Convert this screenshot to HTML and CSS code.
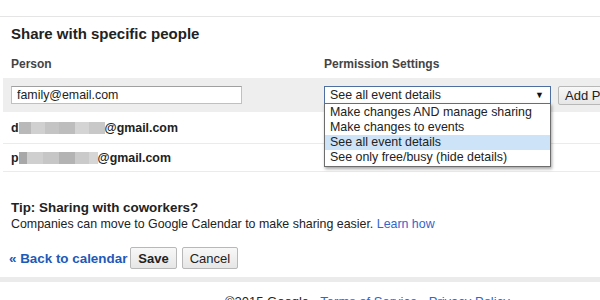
FILE: index.html
```html
<!DOCTYPE html>
<html lang="en">
<head>
    <meta charset="UTF-8">
    <meta name="viewport" content="width=device-width, initial-scale=1.0">
    <title>Calendar sharing</title>
    <link rel="stylesheet" href="styles.css">
</head>
<body>
    <div class="topbar"></div>
    <div class="page">
        <h2 class="share_head">Share with specific people</h2>

        <div class="share_table">
            <div class="share_row share_labels">
                <div class="cell_person">Person</div>
                <div class="cell_perm">Permission Settings</div>
            </div>

            <div class="share_row share_add">
                <div class="cell_person"><input class="person_input" type="text" value="family@email.com"></div>
                <div class="cell_perm">
                    <div class="select_wrap">
                        <div class="select_box"><span>See all event details</span><span class="select_arrow">&#9660;</span></div>
                        <ul class="select_list">
                            <li>Make changes AND manage sharing</li>
                            <li>Make changes to events</li>
                            <li class="selected">See all event details</li>
                            <li>See only free/busy (hide details)</li>
                        </ul>
                    </div>
                    <button class="btn add_btn">Add Person</button>
                </div>
            </div>

            <div class="share_row share_person first_person">
                <div class="cell_person">d<span class="blur blur_d"></span>@gmail.com</div>
            </div>
            <div class="share_row share_person">
                <div class="cell_person">p<span class="blur blur_p"></span>@gmail.com</div>
            </div>
        </div>

        <div class="tip">
            <div class="tip_head">Tip: Sharing with coworkers?</div>
            <div class="tip_text">Companies can move to Google Calendar to make sharing easier. <a href="#" class="link">Learn how</a></div>
        </div>

        <div class="actions">
            <a href="#" class="back_link">&laquo; Back to calendar</a>
            <button class="btn save_btn">Save</button>
            <button class="btn">Cancel</button>
        </div>
    </div>

    <div class="footer_bar"></div>
    <div class="footer">&copy;2015 Google - <a href="#" class="link">Terms of Service</a> - <a href="#" class="link">Privacy Policy</a></div>
</body>
</html>
```

FILE: styles.css
```css
body{
    margin: 0px;
    padding: 0px;
    font-family: "Liberation Sans", Arial, sans-serif;
    font-size: 12.4px;
    color: #222;
    background-color: white;
    overflow: hidden;
    width: 600px;
    height: 300px;
}
.topbar{
    height: 16px;
    border-bottom: 1px solid #e5e5e5;
}
.page{
    width: 760px;
    padding-left: 3px;
}
.share_head{
    margin: 0px;
    padding: 8px 0px 0px 8px;
    font-size: 15px;
    line-height: 18px;
    color: #222;
}

.share_table{
    margin-top: 14px;
}
.share_row{
    display: flex;
    align-items: center;
    padding-left: 8px;
}
.cell_person{
    width: 313px;
}
.cell_perm{
    display: flex;
    align-items: flex-start;
}
.share_labels{
    font-size: 12px;
    font-weight: bold;
    color: #444;
    height: 14px;
    margin-bottom: 7px;
}
.share_add{
    background-color: #eeeeee;
    height: 34px;
}
.person_input{
    box-sizing: border-box;
    width: 231px;
    height: 18px;
    margin: 0px;
    padding: 0px 5px;
    border: 1px solid #c0c0c0;
    border-top-color: #a0a0a0;
    font-family: "Liberation Sans", Arial, sans-serif;
    font-size: 12.4px;
    color: #222;
}

.select_wrap{
    position: relative;
    width: 227px;
}
.select_box{
    box-sizing: border-box;
    height: 18px;
    border: 1px solid #4d6e9e;
    background-color: white;
    display: flex;
    justify-content: space-between;
    align-items: center;
    padding: 0px 6px 0px 5px;
    line-height: 16px;
}
.select_arrow{
    font-size: 9px;
    color: #111;
}
.select_list{
    position: absolute;
    top: 17px;
    left: 0px;
    width: 227px;
    box-sizing: border-box;
    margin: 0px;
    padding: 1px 0px;
    list-style: none;
    background-color: white;
    border: 1px solid #6d6d6d;
    box-shadow: 1px 2px 3px rgba(0, 0, 0, 0.35);
    z-index: 2;
}
.select_list li{
    height: 15px;
    line-height: 15px;
    padding-left: 5px;
    white-space: nowrap;
}
.select_list .selected{
    background-color: #cde3f7;
}

.btn{
    box-sizing: border-box;
    height: 22px;
    padding: 0px 7px;
    border: 1px solid #b8b8b8;
    border-radius: 2px;
    background: linear-gradient(#f8f8f8, #e6e6e6);
    font-family: "Liberation Sans", Arial, sans-serif;
    font-size: 13px;
    color: #222;
}
.add_btn{
    height: 19px;
    margin-left: 7px;
    padding: 0px 6px;
}

.share_person{
    font-weight: bold;
    border-bottom: 1px solid #ebebeb;
    height: 27px;
}
.first_person{
    height: 31px;
}
.blur{
    display: inline-block;
    height: 12px;
    vertical-align: -2px;
}
.blur_d{
    width: 86px;
    background: linear-gradient(90deg, #b9b9b9 0px, #b9b9b9 12px, #d0d0d0 12px, #d0d0d0 26px, #c4c4c4 26px, #c4c4c4 40px, #bdbdbd 40px, #bdbdbd 56px, #d4d4d4 56px, #d4d4d4 70px, #c8c8c8 70px);
}
.blur_p{
    width: 79px;
    background: linear-gradient(90deg, #a8a8a8 0px, #a8a8a8 8px, #cfcfcf 8px, #cfcfcf 24px, #c6c6c6 24px, #c6c6c6 40px, #b3b3b3 40px, #b3b3b3 56px, #cacaca 56px, #cacaca 70px, #d6d6d6 70px);
}

.tip{
    padding: 28px 0px 0px 8px;
}
.tip_head{
    font-weight: bold;
    font-size: 13.4px;
    line-height: 16px;
}
.tip_text{
    line-height: 16px;
}
.link{
    color: #3366cc;
    text-decoration: none;
}

.actions{
    display: flex;
    align-items: center;
    padding: 15px 0px 0px 6px;
}
.back_link{
    color: #2159b7;
    font-weight: bold;
    font-size: 13.4px;
    text-decoration: none;
    margin-right: 3px;
}
.save_btn{
    font-weight: bold;
    margin-right: 5px;
}

.footer_bar{
    margin-top: 8px;
    height: 5px;
    background-color: #ebebeb;
}
.footer{
    padding: 12px 0px 0px 225px;
    font-size: 13px;
    line-height: 16px;
}
```
